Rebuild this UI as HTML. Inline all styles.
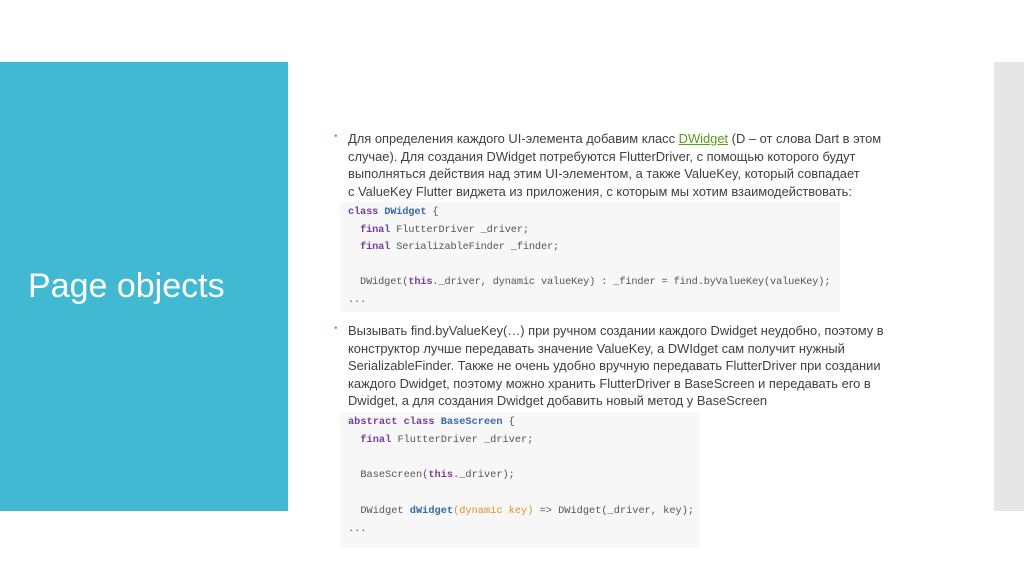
<!DOCTYPE html>
<html><head><meta charset="utf-8"><style>
body{margin:0;width:1024px;height:574px;background:#fff;position:relative;overflow:hidden;font-family:"Liberation Sans",sans-serif}
.blue{position:absolute;left:0;top:62px;width:288px;height:449px;background:#41b9d3}
.title{position:absolute;left:28px;top:267px;color:#fff;font-size:34px}
.gray{position:absolute;left:994px;top:62px;width:30px;height:449px;background:#e6e6e6}
.t{position:absolute;left:348px;font-size:12.9px;line-height:17.5px;color:#404040;width:620px}
.b{position:absolute;left:334px;color:#41b9d3;font-size:10px}
.code{position:absolute;background:#f7f7f7;font-family:"Liberation Mono",monospace;font-size:10.3px;color:#555;white-space:pre;line-height:17.5px;padding-left:8px;box-sizing:border-box}
.k{color:#7a3e9d;font-weight:bold}.c{color:#3a6aa5;font-weight:bold}.o{color:#e0902a}
a{color:#5a9a1a;text-decoration:underline}
</style></head><body>
<div class="blue"></div><div class="title">Page objects</div><div class="gray"></div>
<div class="b" style="top:131px">•</div>
<div class="t" style="top:130px">Для определения каждого UI-элемента добавим класс <a>DWidget</a> (D – от слова Dart в этом<br>случае). Для создания DWidget потребуются FlutterDriver, с помощью которого будут<br>выполняться действия над этим UI-элементом, а также ValueKey, который совпадает<br>с ValueKey Flutter виджета из приложения, с которым мы хотим взаимодействовать:</div>
<div class="code" style="left:340px;top:202px;width:500px;height:110px;padding-top:2px;letter-spacing:-0.15px"><span class="k">class</span> <span class="c">DWidget</span> {
  <span class="k">final</span> FlutterDriver _driver;
  <span class="k">final</span> SerializableFinder _finder;

  DWidget(<span class="k">this</span>._driver, dynamic valueKey) : _finder = find.byValueKey(valueKey);
...</div>
<div class="b" style="top:323px">•</div>
<div class="t" style="top:322px">Вызывать find.byValueKey(…) при ручном создании каждого Dwidget неудобно, поэтому в<br>конструктор лучше передавать значение ValueKey, а DWIdget сам получит нужный<br>SerializableFinder. Также не очень удобно вручную передавать FlutterDriver при создании<br>каждого Dwidget, поэтому можно хранить FlutterDriver в BaseScreen и передавать его в<br>Dwidget, а для создания Dwidget добавить новый метод у BaseScreen</div>
<div class="code" style="left:340px;top:412px;width:360px;height:136px;padding-top:2px;line-height:17.8px"><span class="k">abstract class</span> <span class="c">BaseScreen</span> {
  <span class="k">final</span> FlutterDriver _driver;

  BaseScreen(<span class="k">this</span>._driver);

  DWidget <span class="c">dWidget</span><span class="o">(dynamic key)</span> => DWidget(_driver, key);
...</div>
</body></html>
